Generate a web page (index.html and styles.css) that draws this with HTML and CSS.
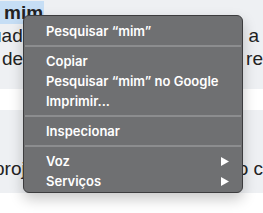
FILE: index.html
```html
<!DOCTYPE html>
<html lang="pt">

<head>
    <meta charset="UTF-8">
    <meta name="viewport" content="width=device-width, initial-scale=1.0">
    <title>Menu de contexto</title>
    <link rel="stylesheet" href="styles.css">
</head>

<body>
    <!-- Page text behind the menu -->
    <div class="band grey top">
        <div class="line"><span class="sel">mim</span></div>
        <div class="line"><span class="cut">uado</span><span class="end">, a</span></div>
        <div class="line"><span class="left">de</span><span>e re</span></div>
    </div>
    <div class="band white short"></div>
    <div class="band grey mid">
        <div class="line"><span class="cut2">proj</span><span>o c</span></div>
    </div>
    <div class="band white"></div>

    <!-- The context menu -->
    <div class="menu">
        <div class="item">Pesquisar “mim”</div>
        <div class="sep"></div>
        <div class="item">Copiar</div>
        <div class="item">Pesquisar “mim” no Google</div>
        <div class="item">Imprimir...</div>
        <div class="sep"></div>
        <div class="item">Inspecionar</div>
        <div class="sep"></div>
        <div class="item">Voz
            <svg class="arrow" width="8" height="9" viewBox="0 0 8 9"><path d="M0 0 L8 4.5 L0 9 Z" fill="#fff"/></svg>
        </div>
        <div class="item">Serviços
            <svg class="arrow" width="8" height="9" viewBox="0 0 8 9"><path d="M0 0 L8 4.5 L0 9 Z" fill="#fff"/></svg>
        </div>
    </div>
</body>

</html>
```

FILE: styles.css
```css
/* Page */
body {
    margin: 0;
    width: 263px;
    height: 213px;
    overflow: hidden;
    font-family: "Liberation Sans", Arial, sans-serif;
    color: #222;
    background-color: #fff;
}

/* Horizontal bands of the page */
.band {
    width: 263px;
    overflow: hidden;
}

.grey {
    background-color: #eef0f3;
}

.white {
    background-color: #fff;
}

.top {
    height: 89px;
    padding-top: 1px;
    box-sizing: border-box;
}

.short {
    height: 21px;
}

.mid {
    height: 83px;
    padding-top: 47px;
    box-sizing: border-box;
}

/* Text lines */
.line {
    display: flex;
    justify-content: space-between;
    font-size: 19px;
    line-height: 23px;
    white-space: nowrap;
}

.sel {
    font-weight: bold;
    background-color: #c6def5;
    padding: 0 1px 0 5px;
    margin-left: -1px;
    line-height: 23px;
}

.cut {
    margin-left: -9px;
}

.end {
    margin-right: 4px;
}

.left {
    margin-left: 2px;
}

.cut2 {
    margin-left: -6px;
}

/* Context menu */
.menu {
    position: absolute;
    left: 23px;
    top: 15px;
    width: 220px;
    height: 178px;
    box-sizing: border-box;
    padding: 5px 1px 3px 1px;
    background-color: #6f7072;
    border: 1px solid #3c3c3e;
    border-radius: 6px;
    box-shadow: 0 6px 14px rgba(0, 0, 0, 0.22);
    font-family: Inter, "Noto Sans", sans-serif;
    font-size: 13px;
    font-weight: 600;
    color: #fff;
}

.item {
    height: 20px;
    line-height: 20px;
    padding-left: 21px;
    padding-right: 12px;
    display: flex;
    align-items: center;
    justify-content: space-between;
}

.arrow {
    display: block;
}

.sep {
    height: 2px;
    margin: 4px 0;
    background-color: #8c8d8f;
}
```
